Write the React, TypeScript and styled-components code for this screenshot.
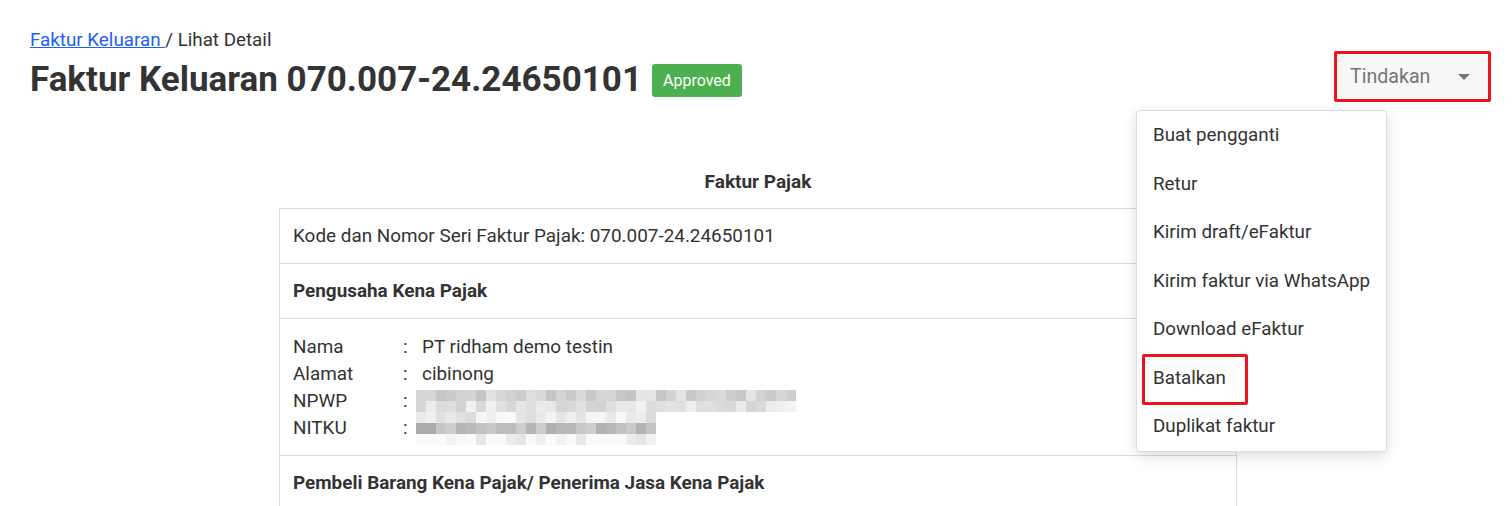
import React from "react";
import styled, { createGlobalStyle } from "styled-components";

const GlobalStyle = createGlobalStyle`
  html, body {
    margin: 0;
    padding: 0;
    background: #ffffff;
    font-family: Roboto, "Liberation Sans", Arial, sans-serif;
    color: #333333;
  }
`;

const Page = styled.div`
  padding: 28px 21px 0 30px;
`;

const Header = styled.div`
  display: flex;
  justify-content: space-between;
  align-items: flex-start;
`;

const Breadcrumb = styled.div`
  font-size: 18.8px;
  line-height: 24px;
  color: #333;
`;

const Crumb = styled.a`
  color: #1f5dfc;
  text-decoration: underline;
`;

const TitleRow = styled.div`
  display: flex;
  align-items: center;
  gap: 10px;
  margin-top: 6px;
`;

const Title = styled.h1`
  margin: 0;
  font-size: 35px;
  line-height: 44px;
  font-weight: 700;
  color: #333;
`;

const Badge = styled.span`
  display: inline-flex;
  align-items: center;
  height: 33px;
  padding: 0 11px;
  border-radius: 3px;
  background: #4caf50;
  color: #fff;
  font-size: 16px;
`;

const ActionWrap = styled.div`
  position: relative;
  margin-top: 23px;
`;

const Highlight = styled.div`
  border: 3px solid #e8141e;
  border-radius: 2px;
`;

const Select = styled.div`
  width: 151px;
  height: 45px;
  box-sizing: border-box;
  display: flex;
  align-items: center;
  justify-content: space-between;
  padding: 0 18px 0 13px;
  background: #f7f7f7;
  color: #757575;
  font-size: 19.6px;
`;

const Caret = styled.span`
  width: 0;
  height: 0;
  border-left: 6px solid transparent;
  border-right: 6px solid transparent;
  border-top: 6px solid #757575;
`;

const Menu = styled.ul`
  position: absolute;
  top: 59px;
  right: 104px;
  width: 251px;
  margin: 0;
  padding: 0;
  list-style: none;
  box-sizing: border-box;
  background: #fff;
  border: 1px solid #dcdcdc;
  border-radius: 4px;
  box-shadow: 0 4px 14px rgba(0, 0, 0, 0.14);
  z-index: 5;
`;

const MenuItem = styled.li`
  position: relative;
  height: 48.5px;
  display: flex;
  align-items: center;
  padding: 0 16px;
  font-size: 18.8px;
  color: #333;
  white-space: nowrap;
`;

const ItemMark = styled.span`
  position: absolute;
  left: 5px;
  top: 0;
  width: 106px;
  height: 51px;
  box-sizing: border-box;
  border: 3px solid #e8141e;
  border-radius: 2px;
`;

const Section = styled.div`
  margin-top: 67px;
  padding-right: 5px;
`;

const Sheet = styled.div`
  width: 958px;
  margin: 0 auto;
`;

const SheetTitle = styled.div`
  text-align: center;
  font-weight: 700;
  font-size: 19px;
  line-height: 26px;
  margin-bottom: 13px;
`;

const Table = styled.div`
  border: 1px solid #dddddd;
  border-bottom: none;
`;

const Row = styled.div<{ $bold?: boolean }>`
  padding: 14px 13px;
  border-bottom: 1px solid #dddddd;
  font-size: 18.9px;
  line-height: 26px;
  font-weight: ${(p) => (p.$bold ? 700 : 400)};
`;

const Details = styled.div`
  display: grid;
  grid-template-columns: 110px 19px auto;
  grid-auto-rows: 27px;
  line-height: 27px;
  font-size: 18.9px;
`;

const Pixels = styled.div<{ $cols: number; $offset: number }>`
  display: grid;
  grid-template-columns: repeat(${(p) => p.$cols}, 10px);
  grid-auto-rows: 11px;
  align-self: start;
  margin-left: -6px;
  margin-top: ${(p) => p.$offset}px;
`;

function Blurred({ cols, rows, seed, offset }: { cols: number; rows: number[]; seed: number; offset: number }) {
  let s = seed;
  const rand = () => {
    s = (s * 9301 + 49297) % 233280;
    return s / 233280;
  };
  const cells: React.ReactNode[] = [];
  rows.forEach((base, r) => {
    for (let c = 0; c < cols; c++) {
      const v = Math.round(base + rand() * 36 - 18);
      const g = Math.max(150, Math.min(250, v));
      cells.push(<span key={`${r}-${c}`} style={{ background: `rgb(${g},${g},${g + 2})` }} />);
    }
  });
  return (
    <Pixels $cols={cols} $offset={offset}>
      {cells}
    </Pixels>
  );
}

const menuItems = [
  "Buat pengganti",
  "Retur",
  "Kirim draft/eFaktur",
  "Kirim faktur via WhatsApp",
  "Download eFaktur",
  "Batalkan",
  "Duplikat faktur",
];

export default function App() {
  return (
    <>
      <GlobalStyle />
      <Page>
        <Header>
          <div>
            <Breadcrumb>
              <Crumb href="#">Faktur Keluaran </Crumb> / Lihat Detail
            </Breadcrumb>
            <TitleRow>
              <Title>Faktur Keluaran 070.007-24.24650101</Title>
              <Badge>Approved</Badge>
            </TitleRow>
          </div>
          <ActionWrap>
            <Highlight>
              <Select>
                Tindakan
                <Caret />
              </Select>
            </Highlight>
            <Menu>
              {menuItems.map((item) => (
                <MenuItem key={item}>
                  {item}
                  {item === "Batalkan" && <ItemMark />}
                </MenuItem>
              ))}
            </Menu>
          </ActionWrap>
        </Header>

        <Section>
          <Sheet>
            <SheetTitle>Faktur Pajak</SheetTitle>
            <Table>
              <Row>Kode dan Nomor Seri Faktur Pajak: 070.007-24.24650101</Row>
              <Row $bold>Pengusaha Kena Pajak</Row>
              <Row>
                <Details>
                  <span>Nama</span>
                  <span>:</span>
                  <span>PT ridham demo testin</span>
                  <span>Alamat</span>
                  <span>:</span>
                  <span>cibinong</span>
                  <span>NPWP</span>
                  <span>:</span>
                  <Blurred cols={38} rows={[212, 226]} seed={7} offset={3} />
                  <span>NITKU</span>
                  <span>:</span>
                  <Blurred cols={24} rows={[236, 188, 246]} seed={31} offset={-2} />
                </Details>
              </Row>
              <Row $bold>Pembeli Barang Kena Pajak/ Penerima Jasa Kena Pajak</Row>
            </Table>
          </Sheet>
        </Section>
      </Page>
    </>
  );
}
